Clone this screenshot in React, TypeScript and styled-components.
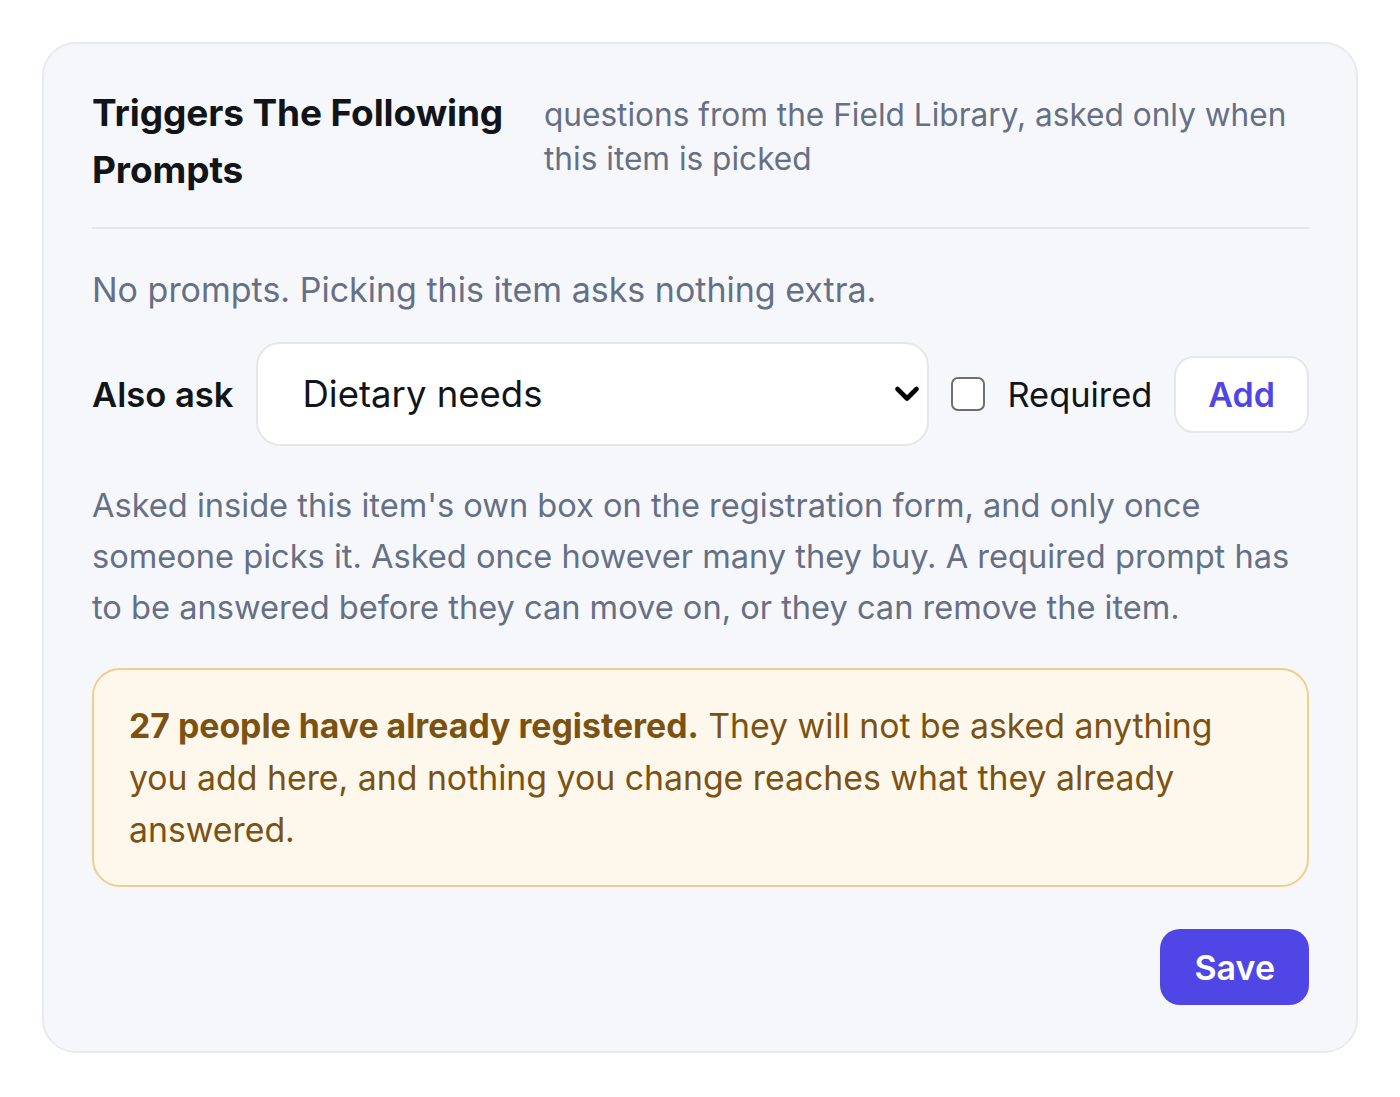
import React from "react";
import styled, { createGlobalStyle } from "styled-components";

const Global = createGlobalStyle`
  html, body { margin: 0; padding: 0; background: #ffffff; }
  body { font-family: Inter, "Noto Sans", "Liberation Sans", sans-serif; -webkit-font-smoothing: antialiased; }
  * { box-sizing: border-box; }
`;

const Page = styled.div`
  padding: 42px 42px 44px 42px;
`;

const Card = styled.section`
  background: #f6f7fa;
  border: 2px solid #e8eaef;
  border-radius: 34px;
  padding: 40px 47px 46px 48px;
  display: flex;
  flex-direction: column;
`;

const Header = styled.div`
  display: flex;
  align-items: baseline;
  gap: 32px;
  padding-bottom: 29px;
  border-bottom: 2px solid #e3e6eb;
`;

const Title = styled.h2`
  margin: 0;
  flex: 0 0 420px;
  font-size: 37px;
  line-height: 57px;
  font-weight: 700;
  color: #111418;
  letter-spacing: -0.1px;
`;

const Subtitle = styled.p`
  margin: 4px 0 0 0;
  flex: 1;
  font-size: 31.6px;
  line-height: 44px;
  color: #667085;
`;

const Muted = styled.p<{ $top: number; $size: number }>`
  margin: ${(p) => p.$top}px 0 0 0;
  font-size: ${(p) => p.$size}px;
  line-height: 51px;
  color: #667085;
`;

const AskRow = styled.div`
  margin-top: 27px;
  display: flex;
  align-items: center;
  gap: 22px;
`;

const Label = styled.span`
  font-size: 34.6px;
  font-weight: 600;
  color: #111418;
  white-space: nowrap;
`;

const SelectWrap = styled.div`
  position: relative;
  flex: 1;
  display: flex;
`;

const Select = styled.select`
  appearance: none;
  -webkit-appearance: none;
  width: 100%;
  height: 104px;
  background: #ffffff;
  border: 2px solid #e5e7eb;
  border-radius: 24px;
  padding: 0 60px 0 45px;
  font-family: Inter, "Noto Sans", "Liberation Sans", sans-serif;
  font-size: 36.5px;
  color: #111418;
  outline: none;
`;

const Chevron = styled.svg`
  position: absolute;
  right: 9px;
  top: 50%;
  transform: translateY(-50%);
  pointer-events: none;
`;

const CheckLabel = styled.label`
  display: flex;
  align-items: center;
  gap: 22px;
  font-size: 34.4px;
  color: #111418;
  white-space: nowrap;
`;

const Checkbox = styled.input`
  appearance: none;
  -webkit-appearance: none;
  margin: 0;
  width: 34px;
  height: 34px;
  border: 2.5px solid #6f6f6f;
  border-radius: 7px;
  background: #ffffff;
`;

const AddButton = styled.button`
  height: 77px;
  padding: 0 32px;
  background: #ffffff;
  border: 2px solid #e5e7eb;
  border-radius: 20px;
  font-family: inherit;
  font-size: 34px;
  font-weight: 600;
  color: #4f46e5;
`;

const Notice = styled.div`
  margin-top: 35px;
  background: #fdf7ec;
  border: 2px solid #efcf8f;
  border-radius: 28px;
  padding: 30px 50px 29px 35px;
  font-size: 33.8px;
  line-height: 52px;
  color: #7b5212;

  strong {
    font-weight: 700;
  }
`;

const Footer = styled.div`
  margin-top: 42px;
  display: flex;
  justify-content: flex-end;
`;

const SaveButton = styled.button`
  height: 76px;
  padding: 0 34px;
  background: #4f46e5;
  border: none;
  border-radius: 20px;
  font-family: inherit;
  font-size: 34px;
  font-weight: 600;
  color: #ffffff;
`;

export default function App() {
  return (
    <>
      <Global />
      <Page>
        <Card>
          <Header>
            <Title>Triggers The Following Prompts</Title>
            <Subtitle>
              questions from the Field Library, asked only when this item is picked
            </Subtitle>
          </Header>
          <Muted $top={35} $size={34}>
            No prompts. Picking this item asks nothing extra.
          </Muted>
          <AskRow>
            <Label>Also ask</Label>
            <SelectWrap>
              <Select defaultValue="dietary">
                <option value="dietary">Dietary needs</option>
              </Select>
              <Chevron width="26" height="17" viewBox="0 0 26 17">
                <path d="M3.5 3.5 L13 13 L22.5 3.5" fill="none" stroke="#000" strokeWidth="4.6" strokeLinecap="round" strokeLinejoin="round" />
              </Chevron>
            </SelectWrap>
            <CheckLabel>
              <Checkbox type="checkbox" />
              Required
            </CheckLabel>
            <AddButton>Add</AddButton>
          </AskRow>
          <Muted $top={34} $size={32.6}>
            Asked inside this item's own box on the registration form, and only once someone picks it. Asked once however many they buy. A required prompt has to be answered before they can move on, or they can remove the item.
          </Muted>
          <Notice>
            <strong>27 people have already registered.</strong> They will not be asked anything you add here, and nothing you change reaches what they already answered.
          </Notice>
          <Footer>
            <SaveButton>Save</SaveButton>
          </Footer>
        </Card>
      </Page>
    </>
  );
}
